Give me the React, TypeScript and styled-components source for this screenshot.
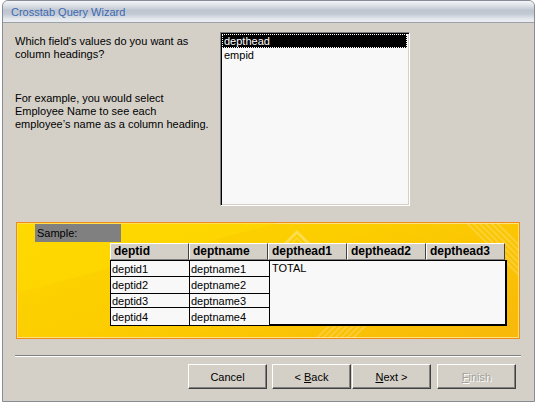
import React from "react";
import styled, { createGlobalStyle } from "styled-components";

const GlobalStyle = createGlobalStyle`
  html, body {
    margin: 0;
    padding: 0;
    background: #ffffff;
  }
  body {
    font-family: "Liberation Sans", Arial, sans-serif;
    font-size: 11px;
    color: #000000;
  }
`;

const Window = styled.div`
  margin-left: 2px;
  width: 531px;
  border: 1px solid #878c96;
  border-radius: 6px 6px 0 0;
  overflow: hidden;
  background: #d4d0c8;
`;

const TitleBar = styled.div`
  height: 21px;
  border-bottom: 1px solid #9aa0aa;
  padding-left: 8px;
  display: flex;
  align-items: center;
  background: linear-gradient(
    #f3f5f8 0%,
    #dfe3e9 20%,
    #bec5d0 45%,
    #c3cad4 62%,
    #e3e7ed 85%,
    #eceef2 100%
  );
  color: #3a69b2;
  font-size: 11px;
`;

const Body = styled.div`
  height: 378px;
  box-sizing: border-box;
  padding: 9px 13px 12px 12px;
  display: flex;
  flex-direction: column;
`;

const TopRow = styled.div`
  display: flex;
  height: 174px;
`;

const Prompt = styled.div`
  width: 205px;
  padding-top: 3px;
  line-height: 13px;
`;

const Para = styled.p<{ gap?: number }>`
  margin: ${(p) => p.gap ?? 0}px 0 0 0;
`;

const ListBox = styled.div`
  width: 190px;
  height: 174px;
  box-sizing: border-box;
  border: 1px solid;
  border-color: #808080 #ffffff #ffffff #808080;
  box-shadow: inset 1px 1px 0 #000000, inset -1px -1px 0 #d4d0c8;
  background: #f8f8f8;
  padding: 1px 2px 0 1px;
`;

const ListItem = styled.div<{ selected?: boolean }>`
  height: 14px;
  line-height: 14px;
  padding-left: 2px;
  box-sizing: border-box;
  background: ${(p) => (p.selected ? "#000000" : "transparent")};
  color: ${(p) => (p.selected ? "#ffffff" : "#000000")};
  outline: ${(p) => (p.selected ? "1px dotted #ffffff" : "none")};
  outline-offset: -1px;
`;

const SamplePanel = styled.div`
  position: relative;
  margin: 16px 0 0 1px;
  width: 504px;
  height: 117px;
  box-sizing: border-box;
  border: 1px solid #f28a1a;
  box-shadow: inset 0 0 0 1px #ffe27a;
  background: linear-gradient(160deg, #fdd700 0%, #fccd00 45%, #f8b80a 100%);
  overflow: hidden;
  padding: 1px 0 0 18px;
`;

const Decor = styled.svg`
  position: absolute;
  left: 0;
  top: 0;
  width: 502px;
  height: 115px;
  pointer-events: none;
`;

const PanelContent = styled.div`
  position: relative;
`;

const SampleLabel = styled.div`
  width: 86px;
  height: 18px;
  line-height: 18px;
  padding-left: 2px;
  box-sizing: border-box;
  background: #808080;
`;

const Table = styled.div`
  margin: 1px 0 0 75px;
`;

const HeaderRow = styled.div`
  display: flex;
`;

const HeaderCell = styled.div`
  width: 79px;
  height: 17px;
  box-sizing: border-box;
  background: #d4d0c8;
  border-top: 1px solid #ffffff;
  border-left: 1px solid #ffffff;
  border-right: 1px solid #404040;
  border-bottom: 1px solid #808080;
  font-weight: bold;
  font-size: 12px;
  line-height: 15px;
  padding-left: 3px;
`;

const DataRow = styled.div`
  display: flex;
`;

const LeftGrid = styled.div`
  display: grid;
  grid-template-columns: 79px 79px;
  grid-template-rows: 16px 17px 14px 18px;
  border-left: 1px solid #000000;
  border-top: 1px solid #000000;
`;

const Cell = styled.div<{ last?: boolean }>`
  box-sizing: border-box;
  background: #f8f8f8;
  border-bottom: 1px solid #000000;
  border-right: ${(p) => (p.last ? "none" : "1px solid #000000")};
  padding-left: 1px;
  display: flex;
  align-items: center;
`;

const TotalBox = styled.div`
  width: 238px;
  height: 66px;
  box-sizing: border-box;
  background: #f8f8f8;
  border: 1px solid #000000;
  border-right-width: 2px;
  border-bottom-width: 2px;
  padding: 1px 2px;
  line-height: 13px;
`;

const Separator = styled.div`
  margin-top: 16px;
  border-top: 1px solid #808080;
  border-bottom: 1px solid #ffffff;
`;

const ButtonRow = styled.div`
  display: flex;
  justify-content: flex-end;
  margin-top: 7px;
  padding-right: 5px;
`;

const Button = styled.div<{ gap?: number; disabled?: boolean }>`
  width: 79px;
  height: 25px;
  margin-left: ${(p) => p.gap ?? 0}px;
  box-sizing: border-box;
  background: #d4d0c8;
  border: 1px solid;
  border-color: #ffffff #404040 #404040 #ffffff;
  box-shadow: inset -1px -1px 0 #808080;
  display: flex;
  align-items: center;
  justify-content: center;
  color: ${(p) => (p.disabled ? "#a09f98" : "#000000")};
  text-shadow: ${(p) => (p.disabled ? "1px 1px 0 #ffffff" : "none")};
  u {
    text-decoration: underline;
  }
`;

const rows = [1, 2, 3, 4];
const heads = ["deptid", "deptname", "depthead1", "depthead2", "depthead3"];

export default function App() {
  return (
    <>
      <GlobalStyle />
      <Window>
        <TitleBar>Crosstab Query Wizard</TitleBar>
        <Body>
          <TopRow>
            <Prompt>
              <Para>
                Which field's values do you want as
                <br />
                column headings?
              </Para>
              <Para gap={31}>
                For example, you would select
                <br />
                Employee Name to see each
                <br />
                employee’s name as a column heading.
              </Para>
            </Prompt>
            <ListBox>
              <ListItem selected>depthead</ListItem>
              <ListItem>empid</ListItem>
            </ListBox>
          </TopRow>

          <SamplePanel>
            <Decor viewBox="0 0 502 115">
              <polygon points="0,0 260,0 0,70" fill="#ffe000" opacity="0.35" />
              <polyline
                points="266,23 280,9 294,23"
                fill="none"
                stroke="#ffffff"
                strokeWidth="3"
                opacity="0.3"
              />
              <polyline
                points="272,23 280,15 288,23"
                fill="none"
                stroke="#ffffff"
                strokeWidth="1.5"
                opacity="0.2"
              />
              {[0, 6, 12, 18, 24, 30].map((d) => (
                <line
                  key={"t" + d}
                  x1={450 + d}
                  y1={0}
                  x2={502}
                  y2={52 - d}
                  stroke="#ffffff"
                  strokeWidth="2"
                  opacity="0.18"
                />
              ))}
              {[0, 6, 12, 18, 24, 30, 36].map((d) => (
                <line
                  key={"b" + d}
                  x1={300 + d}
                  y1={115}
                  x2={318 + d}
                  y2={97}
                  stroke="#ffffff"
                  strokeWidth="2"
                  opacity="0.18"
                />
              ))}
            </Decor>
            <PanelContent>
              <SampleLabel>Sample:</SampleLabel>
              <Table>
                <HeaderRow>
                  {heads.map((h) => (
                    <HeaderCell key={h}>{h}</HeaderCell>
                  ))}
                </HeaderRow>
                <DataRow>
                  <LeftGrid>
                    {rows.map((n) => (
                      <React.Fragment key={n}>
                        <Cell>deptid{n}</Cell>
                        <Cell last>deptname{n}</Cell>
                      </React.Fragment>
                    ))}
                  </LeftGrid>
                  <TotalBox>TOTAL</TotalBox>
                </DataRow>
              </Table>
            </PanelContent>
          </SamplePanel>

          <Separator />

          <ButtonRow>
            <Button>Cancel</Button>
            <Button gap={5}>
              &lt;&nbsp;<u>B</u>ack
            </Button>
            <Button gap={1}>
              <u>N</u>ext&nbsp;&gt;
            </Button>
            <Button gap={6} disabled>
              <u>F</u>inish
            </Button>
          </ButtonRow>
        </Body>
      </Window>
    </>
  );
}
